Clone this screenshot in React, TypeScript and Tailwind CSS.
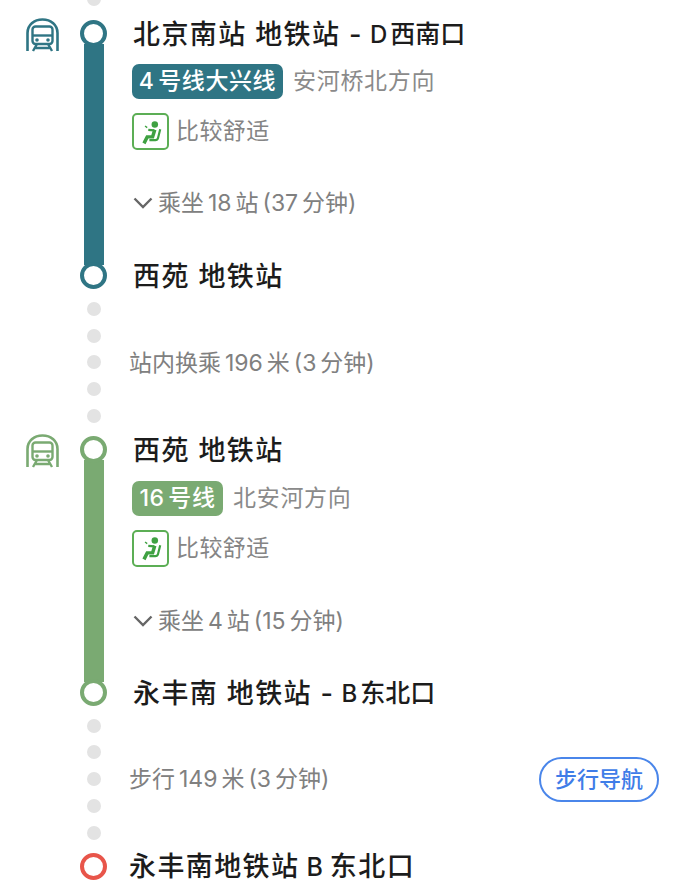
import { ReactNode } from "react";

function SubwayIcon({ color }: { color: string }) {
  return (
    <svg width="33" height="34" viewBox="0 0 33 34" fill="none" stroke={color}>
      <path d="M1.5 33V15C1.5 7 8 1.5 16.5 1.5S31.5 7 31.5 15V33" strokeWidth="2.6" />
      <rect x="6.5" y="8.5" width="20" height="17.5" rx="3" strokeWidth="2.4" />
      <path d="M6.5 17.5H26.5" strokeWidth="2.4" />
      <circle cx="11" cy="22" r="1.8" fill={color} stroke="none" />
      <circle cx="22" cy="22" r="1.8" fill={color} stroke="none" />
      <path d="M11 26L7 33M22 26L26 33M9.5 30H23.5" strokeWidth="2.4" />
    </svg>
  );
}

function SeatIcon() {
  return (
    <div className="flex h-[37px] w-[37px] items-center justify-center rounded-[5px] border-2 border-[#5cae55]">
      <svg width="26" height="26" viewBox="0 0 24 24" fill="none" stroke="#3fa142">
        <circle cx="15.5" cy="5" r="3" fill="#3fa142" stroke="none" />
        <path d="M15.5 10L13.5 16.5H8.5L5.5 22.5" strokeWidth="3.2" />
        <path d="M15 10.5L9.5 10" strokeWidth="2" />
        <path d="M20.5 9.5L18.5 17.5Q18 19.5 16 19.5H10.5" strokeWidth="2" />
        <path d="M6.5 6.5L8.5 8" strokeWidth="1.3" />
      </svg>
    </div>
  );
}

function Chevron() {
  return (
    <svg width="20" height="12" viewBox="0 0 20 12" fill="none" stroke="#666" strokeWidth="2.4">
      <path d="M1.5 1.5L10 10L18.5 1.5" />
    </svg>
  );
}

function Node({ color }: { color: string }) {
  return <div className="relative z-10 h-[27px] w-[27px] shrink-0 rounded-full border-4 bg-white" style={{ borderColor: color }} />;
}

function Title({ children }: { children: ReactNode }) {
  return <div className="flex h-[27px] items-center pt-[3px] text-[27px] font-medium tracking-[1.4px] whitespace-pre text-[#1c1c1c]">{children}</div>;
}

// exit suffix, the letter and its name run smaller than the station name
function Exit({ letter, name }: { letter: string; name: string }) {
  return (
    <>
      <span className="ml-[7px] text-[24px] tracking-normal">{letter}</span>
      <span className="ml-[3px] text-[25px] tracking-normal">{name}</span>
    </>
  );
}

function Dots({ count = 5 }: { count?: number }) {
  return (
    <div className="flex w-[27px] flex-col items-center gap-[12.7px]">
      {Array.from({ length: count }).map((_, i) => (
        <div key={i} className="h-[14px] w-[14px] rounded-full bg-[#e3e3e3]" />
      ))}
    </div>
  );
}

function Leg({ color, badge, badgeWidth, direction, ride, start, end, tall }: any) {
  return (
    <div className="flex">
      <div className="w-[80px] shrink-0 pl-[26px]">
        <div className="-mt-[2px]">
          <SubwayIcon color={color} />
        </div>
      </div>
      <div className="flex w-[27px] shrink-0 flex-col items-center">
        <Node color={color} />
        <div className="-my-[3px] w-[20px] flex-1" style={{ backgroundColor: color }} />
        <Node color={color} />
      </div>
      <div className="ml-[26px] flex-1">
        <Title>{start}</Title>
        <div className={tall ? "mt-[18px] flex items-center" : "mt-[17px] flex items-center"}>
          <div
            className="-ml-px flex h-[35px] items-center justify-center rounded-[7px] text-[23px] font-medium tracking-[0.6px] [word-spacing:-3px] text-white"
            style={{ backgroundColor: color, width: badgeWidth }}
          >
            {badge}
          </div>
          <span className="ml-[10px] text-[23px] tracking-[0.7px] text-[#8a8a8a]">{direction}</span>
        </div>
        <div className="mt-[14px] -ml-px flex items-center">
          <SeatIcon />
          <span className="ml-[7px] text-[23px] tracking-[0.4px] text-[#858585]">比较舒适</span>
        </div>
        <div className={tall ? "mt-[39px] flex h-[30px] items-center" : "mt-[38px] flex h-[30px] items-center"}>
          <Chevron />
          <span className="ml-[5px] pt-px text-[23px] [word-spacing:-2.5px] text-[#808080]">{ride}</span>
        </div>
        <div className={tall ? "mt-[43px]" : "mt-[44px]"}>
          <Title>{end}</Title>
        </div>
      </div>
    </div>
  );
}

function Transfer({ text, action }: { text: string; action?: string }) {
  return (
    <div className="my-[13px] flex items-center">
      <div className="w-[80px] shrink-0" />
      <Dots />
      <span className="ml-[22px] pt-px text-[23px] [word-spacing:-2.5px] text-[#808080]">{text}</span>
      {action && (
        <div className="ml-auto mr-[33px] flex h-[45px] w-[120px] items-center justify-center rounded-full border-2 border-[#4a86ea] text-[22px] font-medium text-[#3f7de8]">
          {action}
        </div>
      )}
    </div>
  );
}

export default function App() {
  return (
    <div
      className="h-[896px] w-[692px] overflow-hidden bg-white"
      style={{ fontFamily: '"Inter", "Noto Sans CJK SC", sans-serif' }}
    >
      <div className="-mt-[8px] ml-[80px] flex w-[27px] justify-center">
        <div className="h-[14px] w-[14px] rounded-full bg-[#e3e3e3]" />
      </div>
      <div className="mt-[14px]">
        <Leg
          color="#2f7584"
          badge="4 号线大兴线"
          badgeWidth={151}
          direction="安河桥北方向"
          ride="乘坐 18 站 (37 分钟)"
          start={<>北京南站 地铁站 -<Exit letter="D" name="西南口" /></>}
          end="西苑 地铁站"
        />
      </div>
      <Transfer text="站内换乘 196 米 (3 分钟)" />
      <Leg
        tall
        color="#7aaa72"
        badge="16 号线"
        badgeWidth={91}
        direction="北安河方向"
        ride="乘坐 4 站 (15 分钟)"
        start="西苑 地铁站"
        end={<>永丰南 地铁站 -<Exit letter="B" name="东北口" /></>}
      />
      <Transfer text="步行 149 米 (3 分钟)" action="步行导航" />
      <div className="flex items-center">
        <div className="w-[80px] shrink-0" />
        <Node color="#e8554a" />
        <div className="ml-[22px]">
          <Title>永丰南地铁站<span className="ml-[7px] text-[25px] tracking-normal">B</span><span className="ml-[7px]">东北口</span></Title>
        </div>
      </div>
    </div>
  );
}
